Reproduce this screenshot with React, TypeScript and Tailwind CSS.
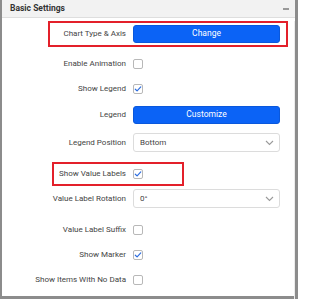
import React from "react";

function Check({ checked }: { checked?: boolean }) {
  return (
    <div className="w-[10px] h-[10px] rounded-[2px] border border-[#b8b8b8] bg-white flex items-center justify-center">
      {checked && (
        <svg width="8" height="8" viewBox="0 0 8 8">
          <path d="M1.3 4.2 L3.1 5.9 L6.8 1.9" fill="none" stroke="#2f6fe0" strokeWidth="1.2" strokeLinecap="round" strokeLinejoin="round" />
        </svg>
      )}
    </div>
  );
}

function Chevron() {
  return (
    <svg width="9" height="6" viewBox="0 0 9 6">
      <path d="M1 1 L4.5 4.5 L8 1" fill="none" stroke="#9a9a9a" strokeWidth="1.1" />
    </svg>
  );
}

function Row({ label, mt, children }: { label: string; mt: string; children: React.ReactNode }) {
  return (
    <div className={`flex items-center h-[25px] ${mt}`}>
      <div className="w-[124px] text-right text-[8px] text-[#444] whitespace-nowrap">{label}</div>
      <div className="ml-[7px] w-[147px] flex items-center">{children}</div>
    </div>
  );
}

function BlueButton({ text }: { text: string }) {
  return (
    <div className="w-full h-[18px] rounded-[3px] bg-[#0b63f6] border border-[#0a58dc] text-white text-[8.5px] flex items-center justify-center">
      {text}
    </div>
  );
}

function SelectBox({ value }: { value: string }) {
  return (
    <div className="w-full h-[19px] rounded-[3px] border border-[#dcdcdc] bg-white flex items-center justify-between pl-[6px] pr-[5px] text-[8px] text-[#444]">
      <span>{value}</span>
      <Chevron />
    </div>
  );
}

export default function App() {
  return (
    <div className="w-[298px] h-[300px] bg-white" style={{ fontFamily: "Roboto, 'Liberation Sans', sans-serif" }}>
      <div className="relative w-[298px] h-[299px] border-l-2 border-r-[3px] border-b-[3px] border-[#8c8c8c] bg-white">
        {/* header */}
        <div className="h-[18px] bg-[#f2f2f2] border-b border-[#dedede] flex items-center justify-between pl-[8px] pr-[6px]">
          <span className="text-[8.5px] font-bold text-[#333]">Basic Settings</span>
          <div className="w-[6px] h-[2px] bg-[#999]" />
        </div>

        <div className="relative pr-[6px] border-r border-[#ececec] h-[278px]">
          {/* annotation boxes */}
          <div className="absolute left-[46px] top-[0px] w-[240px] h-[26px] border-2 border-[#e3202a]" />
          <div className="absolute left-[50px] top-[141px] w-[132px] h-[24px] border-2 border-[#e3202a]" />

          <Row label="Chart Type & Axis" mt="mt-[3px]">
            <BlueButton text="Change" />
          </Row>
          <Row label="Enable Animation" mt="mt-[5px]">
            <Check />
          </Row>
          <Row label="Show Legend" mt="mt-0">
            <Check checked />
          </Row>
          <Row label="Legend" mt="mt-[1px]">
            <BlueButton text="Customize" />
          </Row>
          <Row label="Legend Position" mt="mt-[3px]">
            <SelectBox value="Bottom" />
          </Row>
          <Row label="Show Value Labels" mt="mt-[6px]">
            <Check checked />
          </Row>
          <Row label="Value Label Rotation" mt="mt-0">
            <SelectBox value="0°" />
          </Row>
          <Row label="Value Label Suffix" mt="mt-[6px]">
            <Check />
          </Row>
          <Row label="Show Marker" mt="mt-0">
            <Check checked />
          </Row>
          <Row label="Show Items With No Data" mt="mt-0">
            <Check />
          </Row>
        </div>
      </div>
    </div>
  );
}
